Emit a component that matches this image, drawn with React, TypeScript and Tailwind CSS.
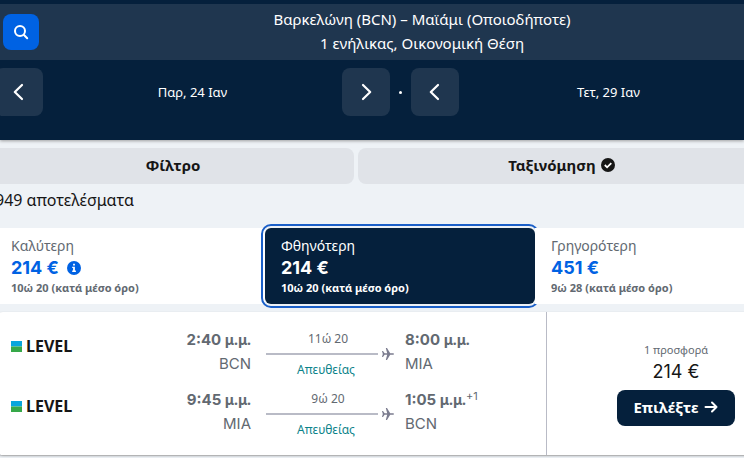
import React from 'react';
import { clsx } from 'clsx';

const legs = [
  {
    departTime: '2:40',
    departCode: 'BCN',
    arriveTime: '8:00',
    arriveCode: 'MIA',
    duration: '11ώ 20',
    nextDay: '',
  },
  {
    departTime: '9:45',
    departCode: 'MIA',
    arriveTime: '1:05',
    arriveCode: 'BCN',
    duration: '9ώ 20',
    nextDay: '+1',
  },
];

const sortTabs = [
  { name: 'Καλύτερη', price: '214 €', average: '10ώ 20', info: true },
  { name: 'Φθηνότερη', price: '214 €', average: '10ώ 20', active: true },
  { name: 'Γρηγορότερη', price: '451 €', average: '9ώ 28' },
];

const Chevron = ({ direction }: { direction: 'left' | 'right' }) => (
  <svg
    viewBox="0 0 24 24"
    className="h-6 w-6"
    fill="none"
    stroke="currentColor"
    strokeWidth="2.2"
    strokeLinecap="round"
    strokeLinejoin="round"
    aria-hidden="true"
  >
    <path d={direction === 'left' ? 'M15 5 7.8 12l7.2 7' : 'M9 5l7.2 7L9 19'} />
  </svg>
);

const DateButton = ({
  direction,
  label,
}: {
  direction: 'left' | 'right';
  label: string;
}) => (
  <button
    type="button"
    aria-label={label}
    className="flex h-12 w-12 shrink-0 items-center justify-center rounded-lg bg-[#1f364f] text-white"
  >
    <Chevron direction={direction} />
  </button>
);

const Plane = () => (
  <svg
    viewBox="0 0 12 12"
    className="h-3 w-3 shrink-0"
    fill="#7b7c8f"
    aria-hidden="true"
  >
    <path d="M0 3h1l1.6 2.2h2.6L3.8 0H5l3.2 5.2h2.6c.7 0 1.2.3 1.2.8s-.5.8-1.2.8H8.2L5 12H3.8l1.4-5.2H2.6L1 9H0l.8-3z" />
  </svg>
);

const Airline = () => (
  <div className="flex h-9 items-center gap-1">
    <svg viewBox="0 0 11 11" className="h-[11px] w-[11px]" aria-hidden="true">
      <path fill="#08a5dc" d="M0 0h11v5.5H0z" />
      <path fill="#36a849" d="M0 5.5h11V11H0z" />
    </svg>
    <span className="text-base font-bold text-[#161616]">LEVEL</span>
  </div>
);

const Time = ({ value }: { value: string }) => (
  <span className="block text-sm leading-6 font-bold">
    <span className="font-['Inter',sans-serif] text-[15px]">{value}</span> μ.μ.
  </span>
);

const Leg = ({ leg }: { leg: (typeof legs)[number] }) => (
  <div className="flex text-[#626971]">
    <Airline />
    <div className="flex-1 text-right leading-6">
      <Time value={leg.departTime} />
      <div className="font-['Inter',sans-serif] text-[15px]">{leg.departCode}</div>
    </div>
    <div className="ml-[15px] w-32">
      <div className="mr-1 h-5 text-center text-xs leading-[22px]">
        {leg.duration}
      </div>
      <div className="flex h-3 items-center gap-1">
        <span className="h-[2px] flex-1 bg-[#b9bbc6]" />
        <Plane />
      </div>
      <div className="mr-2 text-center text-xs leading-5 text-[#0c838a]">
        Απευθείας
      </div>
    </div>
    <div className="ml-[11px] w-[141px] leading-6">
      <div className="flex">
        <Time value={leg.arriveTime} />
        {leg.nextDay && (
          <span className="font-['Inter',sans-serif] text-[11px] leading-4">
            {leg.nextDay}
          </span>
        )}
      </div>
      <div className="font-['Inter',sans-serif] text-[15px]">{leg.arriveCode}</div>
    </div>
  </div>
);

const SearchHeader = () => (
  <header className="bg-[#05203c] pt-1 text-white shadow-[0_1px_3px_#25201f66]">
    <div className="flex h-14 items-center bg-[#1f364f] pl-[3px]">
      <button
        type="button"
        aria-label="Αναζήτηση"
        className="flex h-9 w-9 shrink-0 items-center justify-center rounded-lg bg-[#0062e3]"
      >
        <svg
          viewBox="0 0 16 16"
          className="h-4 w-4"
          fill="none"
          stroke="currentColor"
          strokeWidth="2"
          strokeLinecap="round"
          aria-hidden="true"
        >
          <circle cx="7" cy="7" r="5" />
          <path d="m11 11 3.2 3.2" />
        </svg>
      </button>
      <div className="flex-1 pb-[2px] pl-[61px] text-center text-[15px] leading-6">
        <p>Βαρκελώνη (BCN) – Μαϊάμι (Οποιοδήποτε)</p>
        <p>1 ενήλικας, Οικονομική Θέση</p>
      </div>
    </div>
    <div className="-mr-[14px] -ml-[5px] flex h-20 items-start pt-2 text-[13px] leading-[48px]">
      <DateButton direction="left" label="Προηγούμενη αναχώρηση" />
      <span className="flex-1 text-center">Παρ, 24 Ιαν</span>
      <DateButton direction="right" label="Επόμενη αναχώρηση" />
      <span className="flex h-12 w-[21px] items-center justify-center">
        <span className="h-[3px] w-[3px] rounded-full bg-white" />
      </span>
      <DateButton direction="left" label="Προηγούμενη επιστροφή" />
      <span className="flex-1 text-center">Τετ, 29 Ιαν</span>
    </div>
  </header>
);

const SortTabs = () => (
  <div className="grid grid-cols-3">
    {sortTabs.map((tab) => (
      <button
        key={tab.name}
        type="button"
        className={clsx(
          'h-[76px] pl-4 text-left',
          tab.active
            ? 'rounded-md bg-[#05203c] text-white outline-2 outline-offset-2 outline-[#1a5fc8]'
            : 'bg-white text-[#626971]',
          tab.active ? 'relative z-10' : 'relative',
          tab.name === 'Γρηγορότερη' && 'z-20'
        )}
      >
        <span className="block text-sm leading-5">{tab.name}</span>
        <span
          className={clsx(
            "flex items-center gap-2 font-['Inter',sans-serif] text-lg leading-6 font-bold",
            !tab.active && 'text-[#0062e3]'
          )}
        >
          {tab.price}
          {tab.info && (
            <svg viewBox="0 0 14 14" className="h-[14px] w-[14px]" aria-hidden="true">
              <circle cx="7" cy="7" r="7" fill="#0062e3" />
              <path d="M6.1 2.8h1.8v1.7H6.1zM5.2 5.7h2.7v3.8h1v1.4H5.2V9.5h.9V7.1h-.9z" fill="#fff" />
            </svg>
          )}
        </span>
        <span className="block text-[11px] leading-4 font-bold">
          {tab.average} (κατά μέσο όρο)
        </span>
      </button>
    ))}
  </div>
);

const ResultCard = () => (
  <article className="mt-2 grid h-[143px] grid-cols-[552fr_258fr] rounded-lg bg-white shadow-[0_1px_2px_#25201f66]">
    <div className="flex flex-col gap-2 border-r border-[#b9bbc6] pt-4 pl-4">
      {legs.map((leg) => (
        <Leg key={leg.departTime} leg={leg} />
      ))}
    </div>
    <div className="flex flex-col items-center pt-[30px]">
      <span className="text-[11px] leading-4 text-[#626971]">1 προσφορά</span>
      <span className="font-['Inter',sans-serif] text-lg leading-7 text-[#161616]">
        214 €
      </span>
      <button
        type="button"
        className="mt-1 flex h-9 items-center gap-1 rounded-lg bg-[#05203c] px-4 pb-[2px] text-[15px] font-bold text-white"
      >
        Επιλέξτε
        <svg
          viewBox="0 0 16 16"
          className="h-4 w-4"
          fill="none"
          stroke="currentColor"
          strokeWidth="2"
          strokeLinecap="round"
          strokeLinejoin="round"
          aria-hidden="true"
        >
          <path d="M2.5 8h11M9 3.5 13.5 8 9 12.5" />
        </svg>
      </button>
    </div>
  </article>
);

const App = () => {
  return (
    <div className="min-h-screen overflow-hidden bg-[#eef2f6] font-['Noto_Sans',sans-serif] text-[#161616]">
      <SearchHeader />
      <main>
        <div className="-mr-[22px] -ml-2 grid grid-cols-[362fr_408fr] gap-1 pt-2 text-[15px] font-bold">
          <button type="button" className="h-9 rounded-lg bg-[#e0e3e8] pb-[2px]">
            Φίλτρο
          </button>
          <button
            type="button"
            className="flex h-9 items-center justify-center gap-1 rounded-lg bg-[#e0e3e8] pb-[2px]"
          >
            Ταξινόμηση
            <svg viewBox="0 0 16 16" className="h-4 w-4" aria-hidden="true">
              <circle cx="8" cy="8" r="7" fill="#161616" />
              <path
                d="m4.8 8 2.3 2.3 4.2-4.2"
                fill="none"
                stroke="#fff"
                strokeWidth="1.8"
              />
            </svg>
          </button>
        </div>
        <p className="-ml-[5px] h-11 pt-1 text-base leading-6">949 αποτελέσματα</p>
        <div className="-mr-[61px] -ml-[5px]">
          <SortTabs />
          <ResultCard />
        </div>
      </main>
    </div>
  );
};

export default App;
